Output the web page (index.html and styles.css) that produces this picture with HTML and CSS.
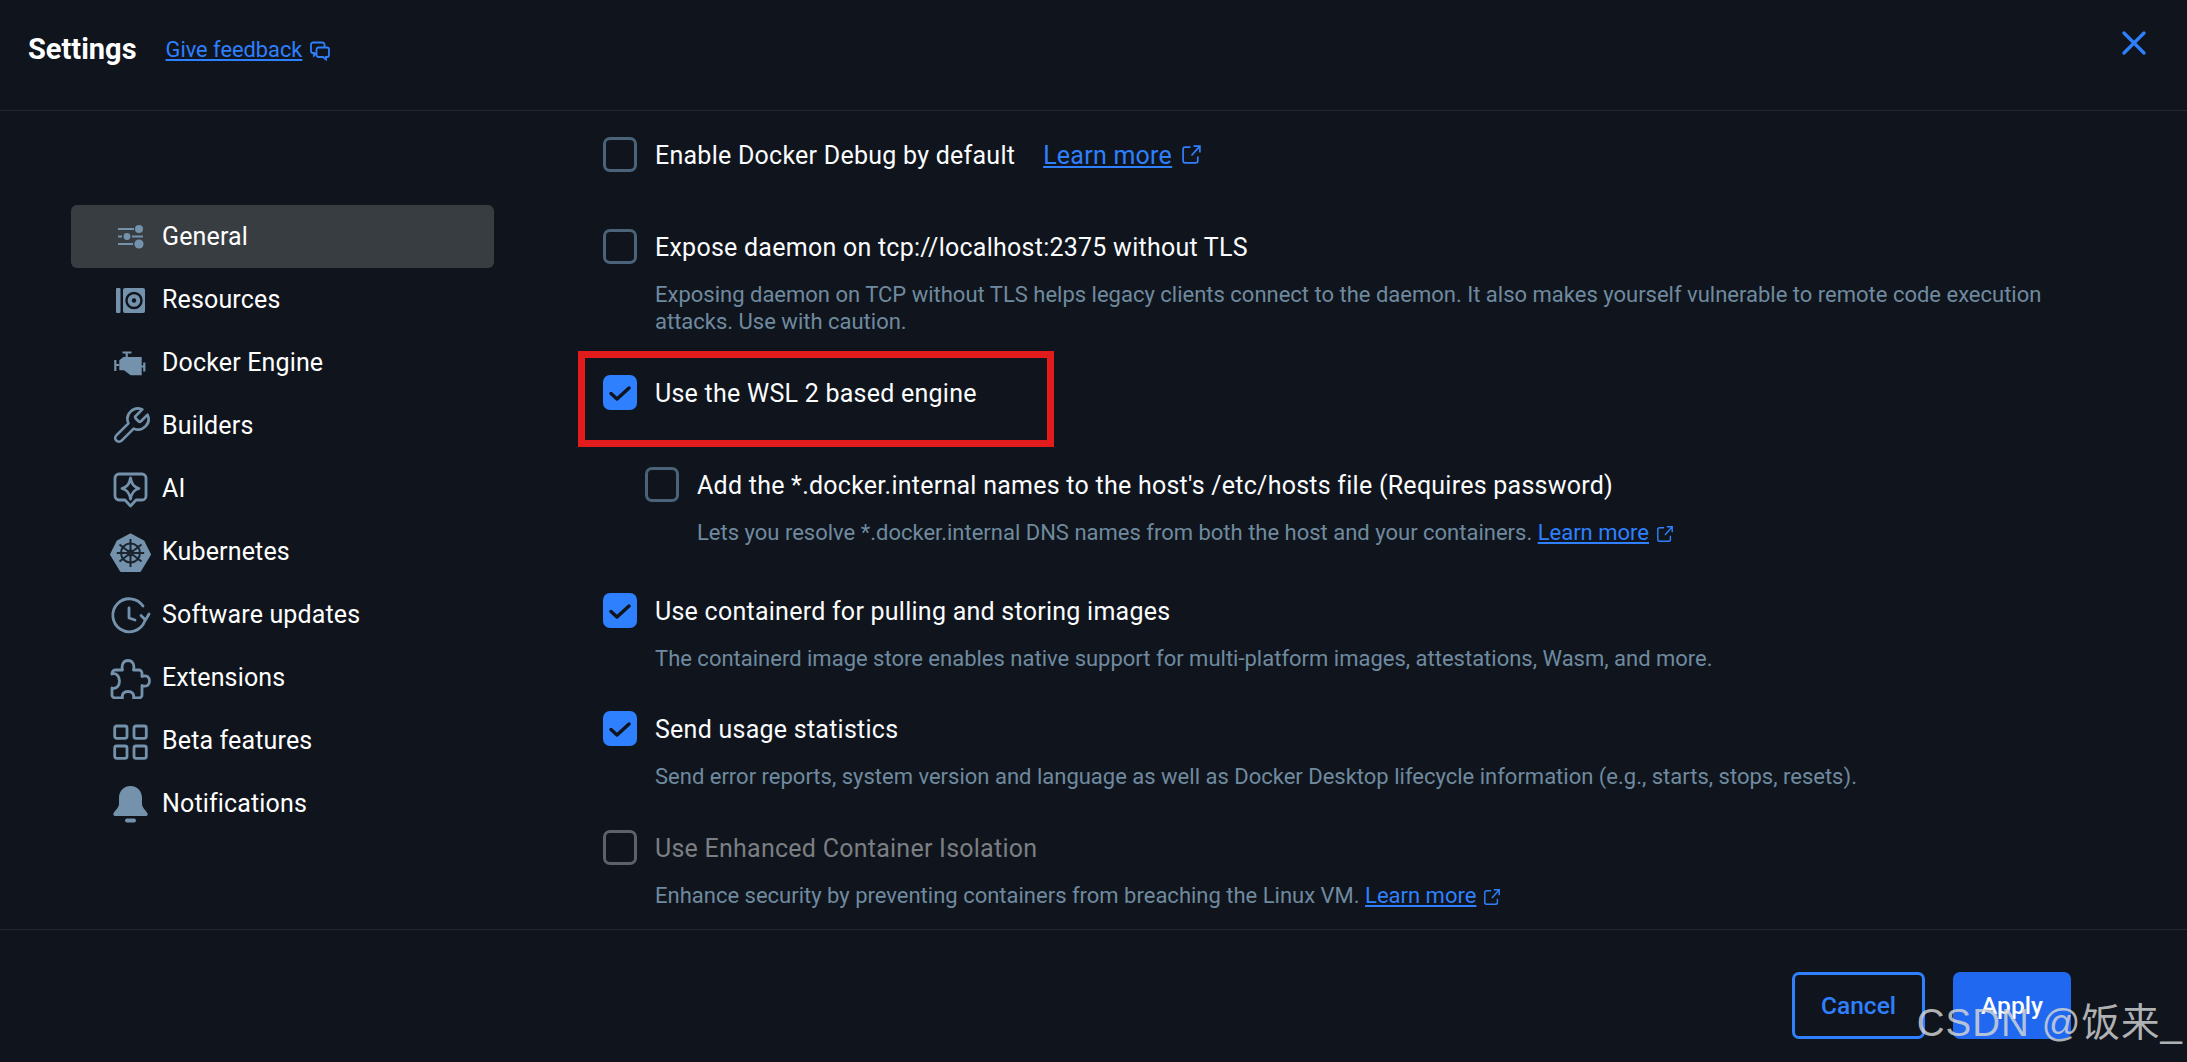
FILE: index.html
```html
<!DOCTYPE html>
<html lang="en">
<head>
    <meta charset="UTF-8">
    <title>Settings</title>
    <link rel="stylesheet" href="styles.css">
</head>
<body>
    <header class="topbar">
        <h1>Settings</h1>
        <a href="#" class="feedback">Give feedback</a>
        <svg class="feedback-icon" viewBox="0 0 20 20"><path d="M14.500 6V3.500a2 2 0 0 0-2-2H3a2 2 0 0 0-2 2V10a2 2 0 0 0 2 2h1v2.500L6.500 12"/><path d="M8.500 6.500H17a2 2 0 0 1 2 2V14a2 2 0 0 1-2 2h-1v2.500L13 16H8.500a2 2 0 0 1-2-2V8.500a2 2 0 0 1 2-2z"/></svg>
        <svg class="close" viewBox="0 0 24 24"><path d="M2 2l20 20M22 2L2 22"/></svg>
    </header>

    <div class="body">
        <nav class="sidebar">
            <a href="#" class="nav-item active">
                <svg class="nav-icon" viewBox="0 0 42 42"><path class="line" d="M8 13h16M8 20.5h4M22 20.5h11M8 28h15"/><circle cx="29" cy="13" r="4"/><circle cx="17" cy="20.5" r="3.4"/><circle cx="29" cy="28" r="4.6"/></svg>
                General
            </a>
            <a href="#" class="nav-item">
                <svg class="nav-icon" viewBox="0 0 42 42"><rect x="6" y="9" width="4.5" height="25" rx="1"/><rect x="13" y="9" width="22" height="25" rx="2"/><circle class="cut" cx="24" cy="21.5" r="7.5"/><circle class="cut-dot" cx="24" cy="21.5" r="2.2"/></svg>
                Resources
            </a>
            <a href="#" class="nav-item">
                <svg class="nav-icon" viewBox="0 0 42 42"><path d="M9.3 18.3L13.3 15h18.4v18.3h-11L14 28.3H9.3z"/><path class="line" d="M12.5 10.5h9M16.7 10.5V15M5.3 18v11M5.3 23h4M34.3 20.5v9M31 24.5h3"/></svg>
                Docker Engine
            </a>
            <a href="#" class="nav-item">
                <svg class="nav-icon outline" viewBox="0 0 24 24"><path d="M14.7 6.3a1 1 0 0 0 0 1.4l1.6 1.6a1 1 0 0 0 1.4 0l3.77-3.77a6 6 0 0 1-7.94 7.94l-6.91 6.91a2.12 2.12 0 0 1-3-3l6.91-6.91a6 6 0 0 1 7.94-7.94l-3.76 3.76z"/></svg>
                Builders
            </a>
            <a href="#" class="nav-item">
                <svg class="nav-icon outline thick" viewBox="0 0 42 42"><path d="M9 6h23a4 4 0 0 1 4 4v18a4 4 0 0 1-4 4h-6l-5.500 6-5.500-6H9a4 4 0 0 1-4-4V10a4 4 0 0 1 4-4z"/><path d="M20.500 10c1 6 3 9 8.500 10.500-5.500 1.500-7.500 4.500-8.500 10.500-1-6-3-9-8.500-10.500 5.500-1.500 7.500-4.500 8.500-10.500z"/></svg>
                AI
            </a>
            <a href="#" class="nav-item">
                <svg class="nav-icon" viewBox="0 0 42 42"><path class="hept" d="M20.500 3.500L33.500 10.500L40 23.500L30 40H11L1 23.500L7.500 10.500z"/><g class="wheel"><circle cx="20.500" cy="22" r="9.500"/><circle class="hub" cx="20.500" cy="22" r="2.400"/><path d="M20.500 8v28M9.500 13.500l22 17M31.500 13.500l-22 17M6.800 22h27.400"/></g></svg>
                Kubernetes
            </a>
            <a href="#" class="nav-item">
                <svg class="nav-icon outline thick" viewBox="0 0 42 42"><path d="M33 12A16.500 16.500 0 1 0 34.800 27"/><path d="M19 14v10l6 2"/><path d="M31 21.500l4.500 4.500 3.500-6"/></svg>
                Software updates
            </a>
            <a href="#" class="nav-item">
                <svg class="nav-icon outline thick" viewBox="0 0 42 42"><path d="M6 13h6.500C11 7 14 3.500 18 3.500S25 7 23.500 13H29a3 3 0 0 1 3 3v3.500c5-2 7.500 1 7.500 4.500s-2.500 6.500-7.500 4.500V38a3 3 0 0 1-3 3h-5.500c1-4-1.500-6.500-5.500-6.500S11.500 37 12.500 41H5a3 3 0 0 1-3-3v-7c4.500 1.500 7.500-2.500 7.500-7S6.500 15.500 2 17v-.5A3.500 3.500 0 0 1 6 13z"/></svg>
                Extensions
            </a>
            <a href="#" class="nav-item">
                <svg class="nav-icon outline thick" viewBox="0 0 42 42"><rect x="4.700" y="6" width="12.300" height="12.300" rx="2"/><rect x="24" y="6" width="12.300" height="12.300" rx="2"/><rect x="4.700" y="26" width="12.300" height="12.300" rx="2"/><rect x="24" y="26" width="12.300" height="12.300" rx="2"/></svg>
                Beta features
            </a>
            <a href="#" class="nav-item">
                <svg class="nav-icon" viewBox="0 0 42 42"><path d="M20.500 3C13 3 9 9 9 15v6c0 4-5.700 8-5.700 10 0 1.500 1 2 2 2h30.400c1.300 0 2-.5 2-2 0-2-5.700-6-5.700-10v-6c0-6-4-12-11.500-12z"/><rect x="15" y="35.500" width="11" height="4" rx="2"/></svg>
                Notifications
            </a>
        </nav>

        <main class="panel">
            <div class="setting">
                <div class="row">
                    <span class="check"></span>
                    <span class="label">Enable Docker Debug by default</span>
                    <a href="#" class="link big">Learn more</a>
                    <svg class="ext big" viewBox="0 0 20 20"><path d="M9 3H4a2 2 0 0 0-2 2v11a2 2 0 0 0 2 2h10a2 2 0 0 0 2-2v-4M12 2h6v6M18 2l-8 9"/></svg>
                </div>
            </div>

            <div class="setting after-plain">
                <div class="row">
                    <span class="check"></span>
                    <span class="label">Expose daemon on tcp://localhost:2375 without TLS</span>
                </div>
                <p class="desc">Exposing daemon on TCP without TLS helps legacy clients connect to the daemon. It also makes yourself vulnerable to remote code execution attacks. Use with caution.</p>
            </div>

            <div class="setting">
                <div class="row">
                    <span class="check on"><svg viewBox="0 0 34 35"><path d="M8 18.500l6 5.500 12-11"/></svg></span>
                    <span class="label">Use the WSL 2 based engine</span>
                    <span class="highlight"></span>
                </div>
            </div>

            <div class="setting nested after-plain">
                <div class="row">
                    <span class="check"></span>
                    <span class="label">Add the *.docker.internal names to the host's /etc/hosts file (Requires password)</span>
                </div>
                <p class="desc">Lets you resolve *.docker.internal DNS names from both the host and your containers. <a href="#" class="link">Learn more</a><svg class="ext" viewBox="0 0 20 20"><path d="M9 3H4a2 2 0 0 0-2 2v11a2 2 0 0 0 2 2h10a2 2 0 0 0 2-2v-4M12 2h6v6M18 2l-8 9"/></svg></p>
            </div>

            <div class="setting tight">
                <div class="row">
                    <span class="check on"><svg viewBox="0 0 34 35"><path d="M8 18.500l6 5.500 12-11"/></svg></span>
                    <span class="label">Use containerd for pulling and storing images</span>
                </div>
                <p class="desc">The containerd image store enables native support for multi-platform images, attestations, Wasm, and more.</p>
            </div>

            <div class="setting">
                <div class="row">
                    <span class="check on"><svg viewBox="0 0 34 35"><path d="M8 18.500l6 5.500 12-11"/></svg></span>
                    <span class="label">Send usage statistics</span>
                </div>
                <p class="desc">Send error reports, system version and language as well as Docker Desktop lifecycle information (e.g., starts, stops, resets).</p>
            </div>

            <div class="setting disabled">
                <div class="row">
                    <span class="check"></span>
                    <span class="label">Use Enhanced Container Isolation</span>
                </div>
                <p class="desc">Enhance security by preventing containers from breaching the Linux VM. <a href="#" class="link">Learn more</a><svg class="ext" viewBox="0 0 20 20"><path d="M9 3H4a2 2 0 0 0-2 2v11a2 2 0 0 0 2 2h10a2 2 0 0 0 2-2v-4M12 2h6v6M18 2l-8 9"/></svg></p>
            </div>
        </main>
    </div>

    <footer class="actions">
        <button class="btn cancel">Cancel</button>
        <button class="btn apply">Apply</button>
    </footer>

    <div class="watermark">CSDN @饭来_</div>
</body>
</html>
```

FILE: styles.css
```css
body {
    margin: 0;
    height: 1062px;
    overflow: hidden;
    position: relative;
    display: flex;
    flex-direction: column;
    background: #10151d;
    color: #fff;
    font-family: Roboto, "Liberation Sans", sans-serif;
}
a {
    color: #2e80ff;
}

.topbar {
    height: 111px;
    box-sizing: border-box;
    padding: 0 28px 12px;
    display: flex;
    align-items: center;
    border-bottom: 1px solid #23272e;
    flex-shrink: 0;
}
.topbar h1 {
    margin: 0 29px 0 0;
    font-size: 29px;
    font-weight: 700;
}
.feedback {
    font-size: 21.8px;
}
.feedback-icon {
    width: 20px;
    height: 20px;
    margin: 3px 0 0 8px;
    fill: none;
    stroke: #2e80ff;
    stroke-width: 1.8;
}
.close {
    width: 24px;
    height: 24px;
    margin-left: auto;
    margin-right: 13px;
    margin-top: -13px;
    fill: none;
    stroke: #2e80ff;
    stroke-width: 3.2;
    stroke-linecap: round;
}

.body {
    flex: 1;
    display: flex;
    min-height: 0;
}
.sidebar {
    width: 423px;
    margin-left: 71px;
    padding-top: 94px;
    flex-shrink: 0;
}
.nav-item {
    height: 63px;
    padding-left: 39px;
    display: flex;
    align-items: center;
    gap: 10px;
    border-radius: 6px;
    color: #fff;
    text-decoration: none;
    font-size: 25px;
    letter-spacing: 0.15px;
}
.nav-item.active {
    background: #383d42;
}
.nav-icon {
    width: 42px;
    height: 42px;
    fill: #7492ab;
    flex-shrink: 0;
}
.nav-icon .line {
    fill: none;
    stroke: #7492ab;
    stroke-width: 2.2;
}
.nav-icon .cut {
    fill: none;
    stroke: #10151d;
    stroke-width: 2.4;
}
.nav-icon .cut-dot {
    fill: #10151d;
}
.nav-icon.outline {
    fill: none;
    stroke: #7492ab;
    stroke-width: 1.5;
    stroke-linejoin: round;
    stroke-linecap: round;
}
.nav-icon.outline.thick {
    stroke-width: 2.8;
}
.hept {
    stroke: #7492ab;
    stroke-width: 2;
    stroke-linejoin: round;
}
.wheel {
    fill: none;
    stroke: #1b2530;
    stroke-width: 2;
}
.wheel .hub {
    fill: #1b2530;
}

.panel {
    flex: 1;
    margin-left: 60px;
    padding: 26px 100px 0 49px;
    overflow: hidden;
}
.setting {
    margin-bottom: 40px;
}
.setting.after-plain {
    margin-top: 57px;
}
.setting.nested {
    margin-left: 42px;
    margin-bottom: 47px;
}
.setting.tight {
    margin-bottom: 39px;
}
.row {
    position: relative;
    display: flex;
    align-items: center;
    min-height: 35px;
}
.check {
    width: 34px;
    height: 35px;
    box-sizing: border-box;
    margin-right: 18px;
    border: 3.5px solid #4a6378;
    border-radius: 7px;
    flex-shrink: 0;
}
.check.on {
    background: #2e80ff;
    border: 0;
}
.check svg {
    display: block;
    width: 34px;
    height: 35px;
    fill: none;
    stroke: #10151d;
    stroke-width: 3.5;
    stroke-linecap: round;
    stroke-linejoin: round;
}
.label {
    padding-top: 1px;
    font-size: 25px;
    letter-spacing: 0.25px;
    color: #fbfcfd;
}
.desc {
    margin: 17px 0 0 52px;
    font-size: 22px;
    line-height: 27px;
    color: #6f8a9f;
}
.link.big {
    margin-left: 28px;
    padding-top: 1px;
    font-size: 25px;
    letter-spacing: 0.25px;
}
.ext {
    width: 18px;
    height: 18px;
    margin-left: 7px;
    vertical-align: -3px;
    fill: none;
    stroke: #2e80ff;
    stroke-width: 1.6;
}
.ext.big {
    width: 21px;
    height: 21px;
    margin-left: 9px;
}
.disabled .check {
    border-color: #5c6268;
}
.disabled .label {
    color: #7b7e82;
}
/* red annotation box drawn over the screenshot */
.highlight {
    position: absolute;
    left: -25px;
    top: -24px;
    width: 476px;
    height: 96px;
    box-sizing: border-box;
    border: 7px solid #e21c1c;
}

.actions {
    height: 133px;
    box-sizing: border-box;
    padding: 42px 116px 0 0;
    border-top: 1px solid #23272e;
    display: flex;
    justify-content: flex-end;
    align-items: flex-start;
    gap: 28px;
    flex-shrink: 0;
    background: #10151d;
}
.btn {
    height: 67px;
    border-radius: 7px;
    font-family: inherit;
    font-size: 24.5px;
    font-weight: 500;
}
.cancel {
    width: 133px;
    background: none;
    border: 3px solid #2e80ff;
    color: #2e80ff;
}
.apply {
    width: 118px;
    background: #2068ef;
    border: 0;
    color: #fff;
}

.watermark {
    position: absolute;
    right: 4px;
    bottom: 12px;
    font-family: "Liberation Sans", "Noto Sans CJK SC", sans-serif;
    font-size: 38.5px;
    line-height: 54px;
    letter-spacing: 1px;
    color: rgba(214, 214, 214, 0.82);
}
```
